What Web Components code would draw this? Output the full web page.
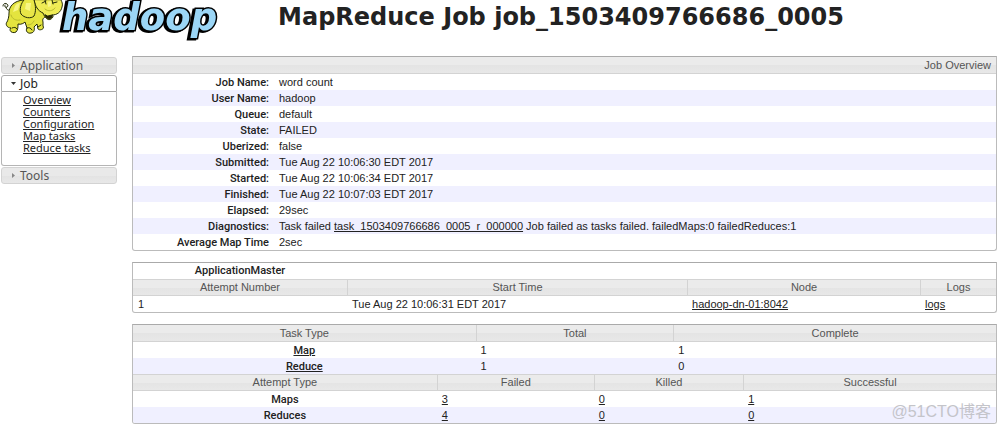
<!DOCTYPE html>
<html lang="en">
<head>
<meta charset="utf-8">
<meta name="viewport" content="width=device-width, initial-scale=1">
<title>MapReduce Job job_1503409766686_0005</title>
<style>
  body { margin: 0; background: #fff; color: #222; font-family: "Liberation Sans", Arial, sans-serif; font-size: 11px; line-height: 14px; }
</style>
</head>
<body>
<job-page>
  <page-header slot="header">MapReduce Job job_1503409766686_0005</page-header>
  <side-nav slot="nav">
    <nav-section label="Application"></nav-section>
    <nav-section label="Job" open>
      <nav-link>Overview</nav-link>
      <nav-link>Counters</nav-link>
      <nav-link>Configuration</nav-link>
      <nav-link>Map tasks</nav-link>
      <nav-link>Reduce tasks</nav-link>
    </nav-section>
    <nav-section label="Tools"></nav-section>
  </side-nav>
  <job-overview></job-overview>
  <app-master></app-master>
  <task-summary></task-summary>
</job-page>
<water-mark>@51CTO博客</water-mark>

<template id="page-template">
  <style>
    :host { display: block; }
    .body { display: grid; grid-template-columns: 116px minmax(0, 1fr); gap: 15px; padding: 0 3px 5px 1px; align-items: start; }
    main { display: flex; flex-direction: column; gap: 11px; }
    nav { padding-top: 1px; }
  </style>
  <slot name="header"></slot>
  <div class="body">
    <nav><slot name="nav"></slot></nav>
    <main><slot></slot></main>
  </div>
</template>

<template id="header-template">
  <style>
    :host { display: flex; height: 56px; align-items: flex-start; }
    svg { flex: none; display: block; }
    .word { font: italic bold 37px "DejaVu Sans", sans-serif; fill: #9bd6f6; stroke: #000; stroke-width: 3px; stroke-linejoin: miter; paint-order: stroke; filter: drop-shadow(-2px 1px 0 #000); }
    h1 { flex: 1; margin: 0; padding: 3px 100px 0 0; text-align: center; font: bold 24px/28px "DejaVu Sans", Verdana, sans-serif; color: #222; }
  </style>
  <svg width="222" height="44" viewBox="0 0 222 44" role="img" aria-label="hadoop">
    <text class="word" x="62" y="30">hadoop</text>
    <g stroke="#222a08" stroke-width="1" stroke-linejoin="round" stroke-linecap="round">
      <path d="M10 10C8 11 6 9 6 7M3 6C3 2 8 3 8 6C7 8 4 8 5 5" fill="none"/>
      <path d="M23 0C14 1 9 6 9 13C9 17 8 20 7 22C5 24 7 28 11 28C8 31 13 34 16 32C18 30 18 27 18 24C21 25 24 23 25 22L27 28C25 31 28 34 31 33C34 33 35 29 34 27L37 24L38 29C40 31 45 29 43 26L43 22C42 19 44 17 46 17L43 0Z" fill="#e4e43f"/>
      <path d="M34 0C35 6 38 11 43 13C45 18 48 21 51 19C53 18 54 15 52 15C57 15 61 12 62 7C63 4 62 2 61 0Z" fill="#efec55"/>
      <path d="M24 0C21 3 19 10 21 14C24 18 31 19 34 16C36 12 36 6 34 0" fill="#e8e648"/>
      <path d="M45 15C46 19 50 20 52 17L52 15L48 16Z" fill="#2a2105"/>
      <path d="M12 28C14 27 16 27 17 29M27 28C29 27 31 28 32 30M38 27L41 25M42 3L46 1M53 3L57 2M45 0L46 4M52 0L53 4" fill="none"/>
      <path d="M11 15C12 19 16 21 20 20M28 25C31 25 33 23 34 21M45 9C48 12 53 11 55 8" fill="none" stroke="#b9bb2c"/>
    </g>
    <path d="M15 6C16 4 18 3 20 3L18 10L13 12ZM26 3L31 3L30 11L25 9ZM48 2L51 1L51 6L48 7Z" fill="#f8f685"/>
  </svg>
  <h1><slot></slot></h1>
</template>

<template id="nav-template">
  <style>:host { display: flex; flex-direction: column; gap: 1px; }</style>
  <slot></slot>
</template>

<template id="section-template">
  <style>
    :host { display: block; font-family: "Noto Sans", Verdana, sans-serif; }
    button { display: flex; align-items: center; gap: 4px; box-sizing: border-box; width: 100%; height: 17px; margin: 0; padding: 0 0 0 9px; border: 1px solid #d3d3d3; border-radius: 3px; background: linear-gradient(#e9e9e9, #e9e9e9 50%, #e3e3e3 50%, #e8e8e8); color: #555; font: 12px/15px "Noto Sans", Verdana, sans-serif; text-align: left; cursor: pointer; }
    svg { width: 5px; height: 5px; fill: #888; }
    .panel { display: none; padding: 2px 0 11px 21px; border: 1px solid #b5b5b5; border-top: 0; border-radius: 0 0 3px 3px; }
    :host([open]) button { background: #fff; border-color: #aaa; border-radius: 3px 3px 0 0; color: #222; }
    :host([open]) svg { transform: rotate(90deg); fill: #333; }
    :host([open]) .panel { display: block; }
  </style>
  <button type="button"><svg viewBox="0 0 5 5" aria-hidden="true"><path d="M1 0L4 2.5L1 5Z"/></svg><span></span></button>
  <div class="panel"><slot></slot></div>
</template>

<template id="link-template">
  <style>
    :host { display: block; height: 12px; font-size: 11px; line-height: 12px; }
    a { color: #222; text-decoration: underline; }
  </style>
  <a href="#"><slot></slot></a>
</template>

<template id="overview-template">
  <table>
    <colgroup><col class="label"><col></colgroup>
    <thead><tr><th class="bar end" colspan="2">Job Overview</th></tr></thead>
    <tbody>
      <tr><th scope="row">Job Name:</th><td>word count</td></tr>
      <tr><th scope="row">User Name:</th><td>hadoop</td></tr>
      <tr><th scope="row">Queue:</th><td>default</td></tr>
      <tr><th scope="row">State:</th><td>FAILED</td></tr>
      <tr><th scope="row">Uberized:</th><td>false</td></tr>
      <tr><th scope="row">Submitted:</th><td>Tue Aug 22 10:06:30 EDT 2017</td></tr>
      <tr><th scope="row">Started:</th><td>Tue Aug 22 10:06:34 EDT 2017</td></tr>
      <tr><th scope="row">Finished:</th><td>Tue Aug 22 10:07:03 EDT 2017</td></tr>
      <tr><th scope="row">Elapsed:</th><td>29sec</td></tr>
      <tr><th scope="row">Diagnostics:</th><td>Task failed <a href="#">task_1503409766686_0005_r_000000</a> Job failed as tasks failed. failedMaps:0 failedReduces:1</td></tr>
      <tr><th scope="row">Average Map Time</th><td>2sec</td></tr>
    </tbody>
  </table>
</template>

<template id="master-template">
  <table>
    <colgroup><col style="width:24.8%"><col style="width:39.4%"><col style="width:27%"><col style="width:8.8%"></colgroup>
    <thead>
      <tr><th>ApplicationMaster</th><td colspan="3"></td></tr>
      <tr><th class="bar">Attempt Number</th><th class="bar">Start Time</th><th class="bar">Node</th><th class="bar">Logs</th></tr>
    </thead>
    <tbody><tr><td>1</td><td>Tue Aug 22 10:06:31 EDT 2017</td><td><a href="#">hadoop-dn-01:8042</a></td><td><a href="#">logs</a></td></tr></tbody>
  </table>
</template>

<template id="summary-template">
  <table>
    <colgroup><col style="width:39.7%"><col style="width:22.9%"><col style="width:37.4%"></colgroup>
    <thead><tr><th class="bar">Task Type</th><th class="bar">Total</th><th class="bar">Complete</th></tr></thead>
    <tbody>
      <tr><th scope="row"><a href="#">Map</a></th><td>1</td><td>1</td></tr>
      <tr><th scope="row"><a href="#">Reduce</a></th><td>1</td><td>0</td></tr>
    </tbody>
  </table>
  <table>
    <colgroup><col style="width:35.2%"><col style="width:18.2%"><col style="width:17.3%"><col style="width:29.3%"></colgroup>
    <thead><tr><th class="bar">Attempt Type</th><th class="bar">Failed</th><th class="bar">Killed</th><th class="bar">Successful</th></tr></thead>
    <tbody>
      <tr><th scope="row">Maps</th><td><a href="#">3</a></td><td><a href="#">0</a></td><td><a href="#">1</a></td></tr>
      <tr><th scope="row">Reduces</th><td><a href="#">4</a></td><td><a href="#">0</a></td><td><a href="#">0</a></td></tr>
    </tbody>
  </table>
</template>

<script>
  const tableStyles = `
    :host { display: block; border: 1px solid #bbb; border-top-color: #aaa; border-radius: 0 0 3px 3px; overflow: hidden; }
    table { width: 100%; table-layout: fixed; border-collapse: separate; border-spacing: 0; }
    td, th { height: 16px; box-sizing: border-box; padding: 1px 5px 0; text-align: left; font-size: 11px; line-height: 14px; vertical-align: baseline; }
    th { font-family: Roboto, "Liberation Sans", sans-serif; font-weight: 500; text-align: center; }
    .bar { height: 17px; font-family: "Liberation Sans", Arial, sans-serif; font-weight: 400; color: #555; border-left: 1px solid #d3d3d3; border-bottom: 1px solid #d3d3d3; background: linear-gradient(#ebebeb, #ebebeb 50%, #e4e4e4 50%, #e8e8e8); }
    .bar:first-child { border-left: 0; }
    tbody tr:nth-child(even) { background: #f0f0ff; }
    a { color: #222; text-decoration: underline; }
  `;

  function define(name, templateId, styles = '', setup) {
    customElements.define(name, class extends HTMLElement {
      constructor() {
        super();
        const root = this.attachShadow({ mode: 'open' });
        if (styles) {
          const style = document.createElement('style');
          style.textContent = styles;
          root.append(style);
        }
        root.append(document.getElementById(templateId).content.cloneNode(true));
        if (setup) setup(this, root);
      }
    });
  }

  define('job-page', 'page-template');
  define('page-header', 'header-template');
  define('side-nav', 'nav-template');
  define('nav-section', 'section-template', '', (host, root) => {
    const button = root.querySelector('button');
    root.querySelector('span').textContent = host.getAttribute('label');
    button.setAttribute('aria-expanded', host.hasAttribute('open'));
    button.addEventListener('click', () => {
      button.setAttribute('aria-expanded', host.toggleAttribute('open'));
    });
  });
  define('nav-link', 'link-template');
  define('job-overview', 'overview-template', tableStyles + `
    .label { width: 141px; }
    tbody th, .end { text-align: right; }
  `);
  define('app-master', 'master-template', tableStyles + `
    .bar { border-top: 1px solid #d3d3d3; padding-top: 0; }
  `);
  define('task-summary', 'summary-template', tableStyles + `
    table + table .bar { border-top: 1px solid #d3d3d3; padding-top: 0; }
  `);
  customElements.define('water-mark', class extends HTMLElement {
    constructor() {
      super();
      this.attachShadow({ mode: 'open' }).innerHTML = `
        <style>
          :host { position: absolute; right: 9px; top: 402px; font: 16px/20px "Liberation Sans", "Noto Sans CJK SC", sans-serif; color: #c4c4ca; pointer-events: none; }
        </style><slot></slot>`;
    }
  });
</script>
</body>
</html>
